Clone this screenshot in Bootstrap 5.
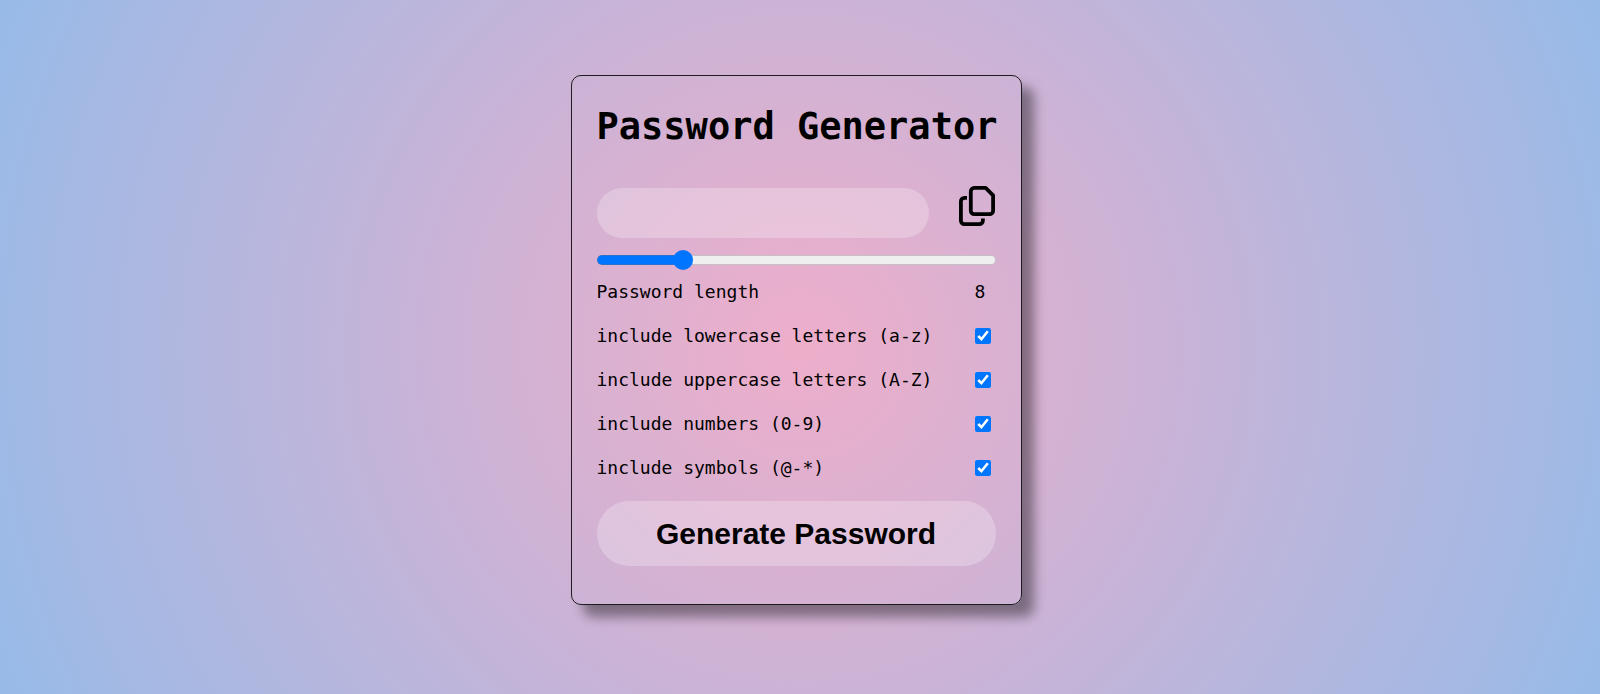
<!DOCTYPE html>
<html lang="en">
<head>
<meta charset="utf-8">
<meta name="viewport" content="width=device-width, initial-scale=1">
<title>Password Generator</title>
<link href="https://cdn.jsdelivr.net/npm/bootstrap@5.3.0/dist/css/bootstrap.min.css" rel="stylesheet">
<style>
  body {
    background: radial-gradient(circle, rgb(238, 174, 202) 0%, rgb(148, 187, 233) 104%) no-repeat;
    color: #000;
    font-family: "DejaVu Sans Mono", monospace;
    font-size: 18px;
    line-height: 24px;
  }
  .stage { padding: 0 8px 14px 0; }
  .generator {
    width: 100%;
    max-width: 451px;
    padding: 25px 25px 38px;
    border: 1px solid rgba(0, 0, 0, .85);
    border-radius: 10px;
    box-shadow: 12px 12px 12px rgba(0, 0, 0, .4);
  }
  .generator h1 { font-size: 37px; line-height: 52px; margin-bottom: 32px; }
  .output {
    height: 50px;
    max-width: 332px;
    margin-top: 3px;
    border: 0;
    background: rgba(255, 255, 255, .25);
    padding: 0 20px;
    font-size: 18px;
  }
  .output:focus { background: rgba(255, 255, 255, .35); }
  .copy { margin: 1px 1px 0 0; }
  .copy svg { width: 36px; height: 40px; }
  .length-range { height: 20px; margin: 12px 0 10px; }
  .length-range::-webkit-slider-runnable-track {
    height: 10px;
    border-radius: 5px;
    border: 1px solid rgba(120, 110, 120, .35);
    background: linear-gradient(to right, #0075ff var(--fill), #efefef var(--fill)) border-box;
  }
  .length-range::-webkit-slider-thumb {
    width: 20px;
    height: 20px;
    margin-top: -6px;
    background: #0075ff;
  }
  .options { gap: 20px; margin-bottom: 21px; }
  .options output, .tick { width: 21px; }
  .tick input { width: 16px; height: 16px; margin: 0; accent-color: #0075ff; }
  .generate {
    height: 65px;
    border: 0;
    background: rgba(255, 255, 255, .25);
    color: #000;
    font: bold 30px/36px "Liberation Sans", Arial, sans-serif;
  }
  .generate:hover { background: rgba(255, 255, 255, .4); color: #000; }
</style>
</head>
<body>
<div class="stage min-vh-100 d-flex align-items-center justify-content-center">
  <main class="generator">
    <h1 class="fw-bold text-nowrap">Password Generator</h1>
    <div class="d-flex justify-content-between align-items-start">
      <input type="text" class="output form-control rounded-pill" aria-label="Generated password" readonly>
      <button type="button" class="copy btn border-0 p-0 lh-1 d-flex" aria-label="Copy password">
        <svg viewBox="0 0 36 40" fill="none" stroke="#000" stroke-width="3.8" stroke-linejoin="round" aria-hidden="true">
          <path d="M15.5 1.9H26.6L34.1 9.4V24.7a3.5 3.5 0 0 1-3.5 3.5H15.3a3.5 3.5 0 0 1-3.5-3.5V5.4a3.5 3.5 0 0 1 3.7-3.5Z"/>
          <path d="M8 11.8H5.4a3.5 3.5 0 0 0-3.5 3.5V34.6a3.5 3.5 0 0 0 3.5 3.5H20.4a3.5 3.5 0 0 0 3.5-3.5V32.5"/>
        </svg>
      </button>
    </div>
    <input type="range" id="length" class="length-range form-range d-block" min="0" max="40" value="8" style="--fill: 21%">
    <div class="options d-flex flex-column">
      <div class="d-flex justify-content-between">
        <label for="length">Password length</label>
        <output for="length">8</output>
      </div>
      <div class="d-flex justify-content-between">
        <label for="lower">include lowercase letters (a-z)</label>
        <span class="tick d-flex align-items-center"><input type="checkbox" id="lower" checked></span>
      </div>
      <div class="d-flex justify-content-between">
        <label for="upper">include uppercase letters (A-Z)</label>
        <span class="tick d-flex align-items-center"><input type="checkbox" id="upper" checked></span>
      </div>
      <div class="d-flex justify-content-between">
        <label for="numbers">include numbers (0-9)</label>
        <span class="tick d-flex align-items-center"><input type="checkbox" id="numbers" checked></span>
      </div>
      <div class="d-flex justify-content-between">
        <label for="symbols">include symbols (@-*)</label>
        <span class="tick d-flex align-items-center"><input type="checkbox" id="symbols" checked></span>
      </div>
    </div>
    <button type="button" class="generate btn rounded-pill w-100">Generate Password</button>
  </main>
</div>
<script src="https://cdn.jsdelivr.net/npm/bootstrap@5.3.0/dist/js/bootstrap.bundle.min.js"></script>
</body>
</html>
